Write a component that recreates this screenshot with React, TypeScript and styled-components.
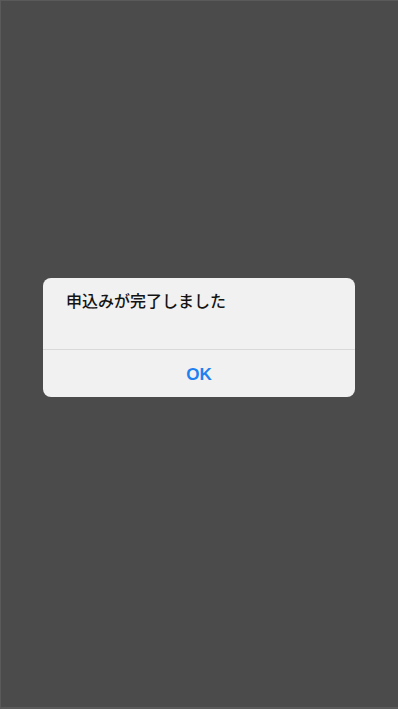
import React from "react";
import styled, { createGlobalStyle } from "styled-components";

const Global = createGlobalStyle`
  html, body { margin: 0; padding: 0; background: #4b4b4b; }
  * { box-sizing: border-box; }
`;

const Screen = styled.div`
  width: 398px;
  height: 709px;
  background: #4b4b4b;
  border-top: 1px solid #5a5a5a;
  border-left: 1px solid #5a5a5a;
  border-bottom: 2px solid #5a5a5a;
  display: flex;
  flex-direction: column;
  align-items: center;
  padding-top: 277px;
  padding-right: 1px;
  font-family: "Noto Sans CJK JP", "Noto Sans", sans-serif;
`;

const Dialog = styled.div`
  width: 312px;
  background: #f1f1f1;
  border-radius: 8px;
  display: flex;
  flex-direction: column;
  overflow: hidden;
`;

const Message = styled.div`
  height: 72px;
  padding: 11px 23px 0;
  font-size: 16px;
  font-weight: 500;
  line-height: 22px;
  color: #141414;
  border-bottom: 1px solid #d9d9d9;
`;

const Button = styled.button`
  height: 47px;
  border: none;
  background: transparent;
  font-family: "Liberation Sans", Arial, sans-serif;
  font-weight: 700;
  font-size: 17px;
  color: #1f80f0;
  padding: 3px 0 0;
  cursor: pointer;
`;

export default function App() {
  return (
    <>
      <Global />
      <Screen>
        <Dialog>
          <Message>申込みが完了しました</Message>
          <Button>OK</Button>
        </Dialog>
      </Screen>
    </>
  );
}
